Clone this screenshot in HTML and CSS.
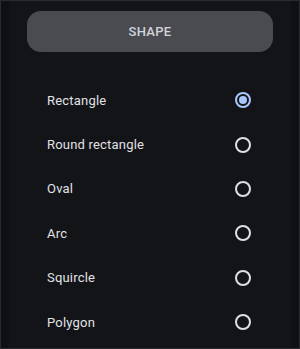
FILE: index.html
```html
<!DOCTYPE html>
<html>
<head>
<meta charset="utf-8">
<link rel="stylesheet" href="styles.css">
</head>
<body>
<div class="frame">
  <div class="panel">
    <div class="header">
      <button class="shape-btn">SHAPE</button>
    </div>
    <ul class="options">
      <li class="option"><span class="label">Rectangle</span><span class="radio checked"></span></li>
      <li class="option"><span class="label">Round rectangle</span><span class="radio"></span></li>
      <li class="option"><span class="label">Oval</span><span class="radio"></span></li>
      <li class="option"><span class="label">Arc</span><span class="radio"></span></li>
      <li class="option"><span class="label">Squircle</span><span class="radio"></span></li>
      <li class="option"><span class="label">Polygon</span><span class="radio"></span></li>
    </ul>
  </div>
</div>
</body>
</html>
```
FILE: styles.css
```css
html, body {
  margin: 0;
  padding: 0;
  background: #0c0d10;
}
body {
  width: 300px;
  height: 349px;
  overflow: hidden;
  font-family: Roboto, "Noto Sans", sans-serif;
}
.frame {
  box-sizing: border-box;
  width: 300px;
  height: 349px;
  border: 1px solid #2a2b2f;
  background: #0f1013;
  padding: 0 8px;
}
.panel {
  background: #131418;
  height: 100%;
  box-sizing: border-box;
  padding-top: 10px;
}
.header {
  padding: 0 18px;
}
.shape-btn {
  display: block;
  width: 100%;
  height: 41px;
  border: none;
  border-radius: 14px;
  background: #494b51;
  color: #d3d4da;
  font-family: Roboto, sans-serif;
  font-size: 13px;
  font-weight: 500;
  letter-spacing: 0.3px;
}
.options {
  list-style: none;
  margin: 0;
  padding: 26px 0 0 0;
}
.option {
  display: flex;
  align-items: center;
  justify-content: space-between;
  height: 44.4px;
  padding: 0 40px 0 38px;
}
.label {
  color: #e2e2e6;
  font-size: 13px;
  letter-spacing: 0.2px;
}
.radio {
  box-sizing: border-box;
  width: 16px;
  height: 16px;
  border-radius: 50%;
  border: 2px solid #e0e0e4;
  position: relative;
}
.radio.checked {
  border-color: #a8c7fa;
}
.radio.checked::after {
  content: "";
  position: absolute;
  left: 2px;
  top: 2px;
  width: 8px;
  height: 8px;
  border-radius: 50%;
  background: #a8c7fa;
}
```
